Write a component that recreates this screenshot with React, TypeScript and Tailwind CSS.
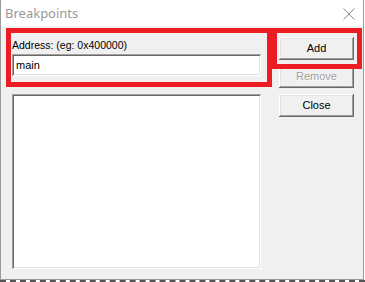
import React from 'react';

const raised =
  'shadow-[inset_-1px_-1px_#696969,inset_1px_1px_#ffffff,inset_-2px_-2px_#a0a0a0,inset_2px_2px_#e3e3e3]';
const sunken =
  'shadow-[inset_1px_1px_#a0a0a0,inset_-1px_-1px_#ffffff,inset_2px_2px_#696969,inset_-2px_-2px_#e3e3e3]';

const DialogButton: React.FC<{ label: string; disabled?: boolean; className?: string }> = ({
  label,
  disabled,
  className = '',
}) => (
  <button
    className={`w-[75px] h-[23px] bg-[#f0f0f0] text-[11px] leading-none flex items-center justify-center ${raised} ${
      disabled ? 'text-[#a0a0a0] [text-shadow:1px_1px_#ffffff]' : 'text-black'
    } ${className}`}
  >
    {label}
  </button>
);

export default function App() {
  return (
    <div className="relative w-[365px] h-[282px] bg-white overflow-hidden font-['Liberation_Sans',Arial,sans-serif]">
      <div className="w-[364px] h-[280px] flex flex-col bg-[#f0f0f0] border-x border-b border-[#9b9b9b]">
        {/* Title bar */}
        <div className="h-[26px] bg-white flex items-center justify-between pl-[4px] pr-[8px]">
          <span className="text-[13px] text-[#999999] font-['Noto_Sans',sans-serif] leading-none">
            Breakpoints
          </span>
          <svg width="12" height="12" viewBox="0 0 12 12" className="mt-[2px]">
            <path d="M0.5 0.5 L11.5 11.5 M11.5 0.5 L0.5 11.5" stroke="#8a8a8a" strokeWidth="1" fill="none" />
          </svg>
        </div>

        {/* Client area */}
        <div className="flex-1 flex pl-[11px]">
          <div className="w-[249px] flex flex-col">
            <label className="mt-[12px] h-[14px] text-[10.5px] leading-[14px] text-black">
              Address: (eg: 0x400000)
            </label>
            <div className={`mt-[2px] h-[22px] bg-white ${sunken} flex items-center pl-[4px] text-[11px] text-black`}>
              main
            </div>
            <div className={`mt-[18px] h-[175px] bg-white ${sunken}`} />
          </div>

          <div className="ml-[18px] flex flex-col">
            <DialogButton label="Add" className="mt-[11px]" />
            <DialogButton label="Remove" disabled className="mt-[5px]" />
            <DialogButton label="Close" className="mt-[6px]" />
          </div>
        </div>
      </div>

      {/* Background below the window */}
      <div className="h-[2px] border-t-2 border-dashed border-[#555555]" />

      {/* Annotation boxes */}
      <div className="absolute left-[6px] top-[28px] w-[266px] h-[59px] border-[5px] border-[#ed1c24]" />
      <div className="absolute left-[272px] top-[28px] w-[90px] h-[41px] border-[5px] border-[#ed1c24]" />
    </div>
  );
}
